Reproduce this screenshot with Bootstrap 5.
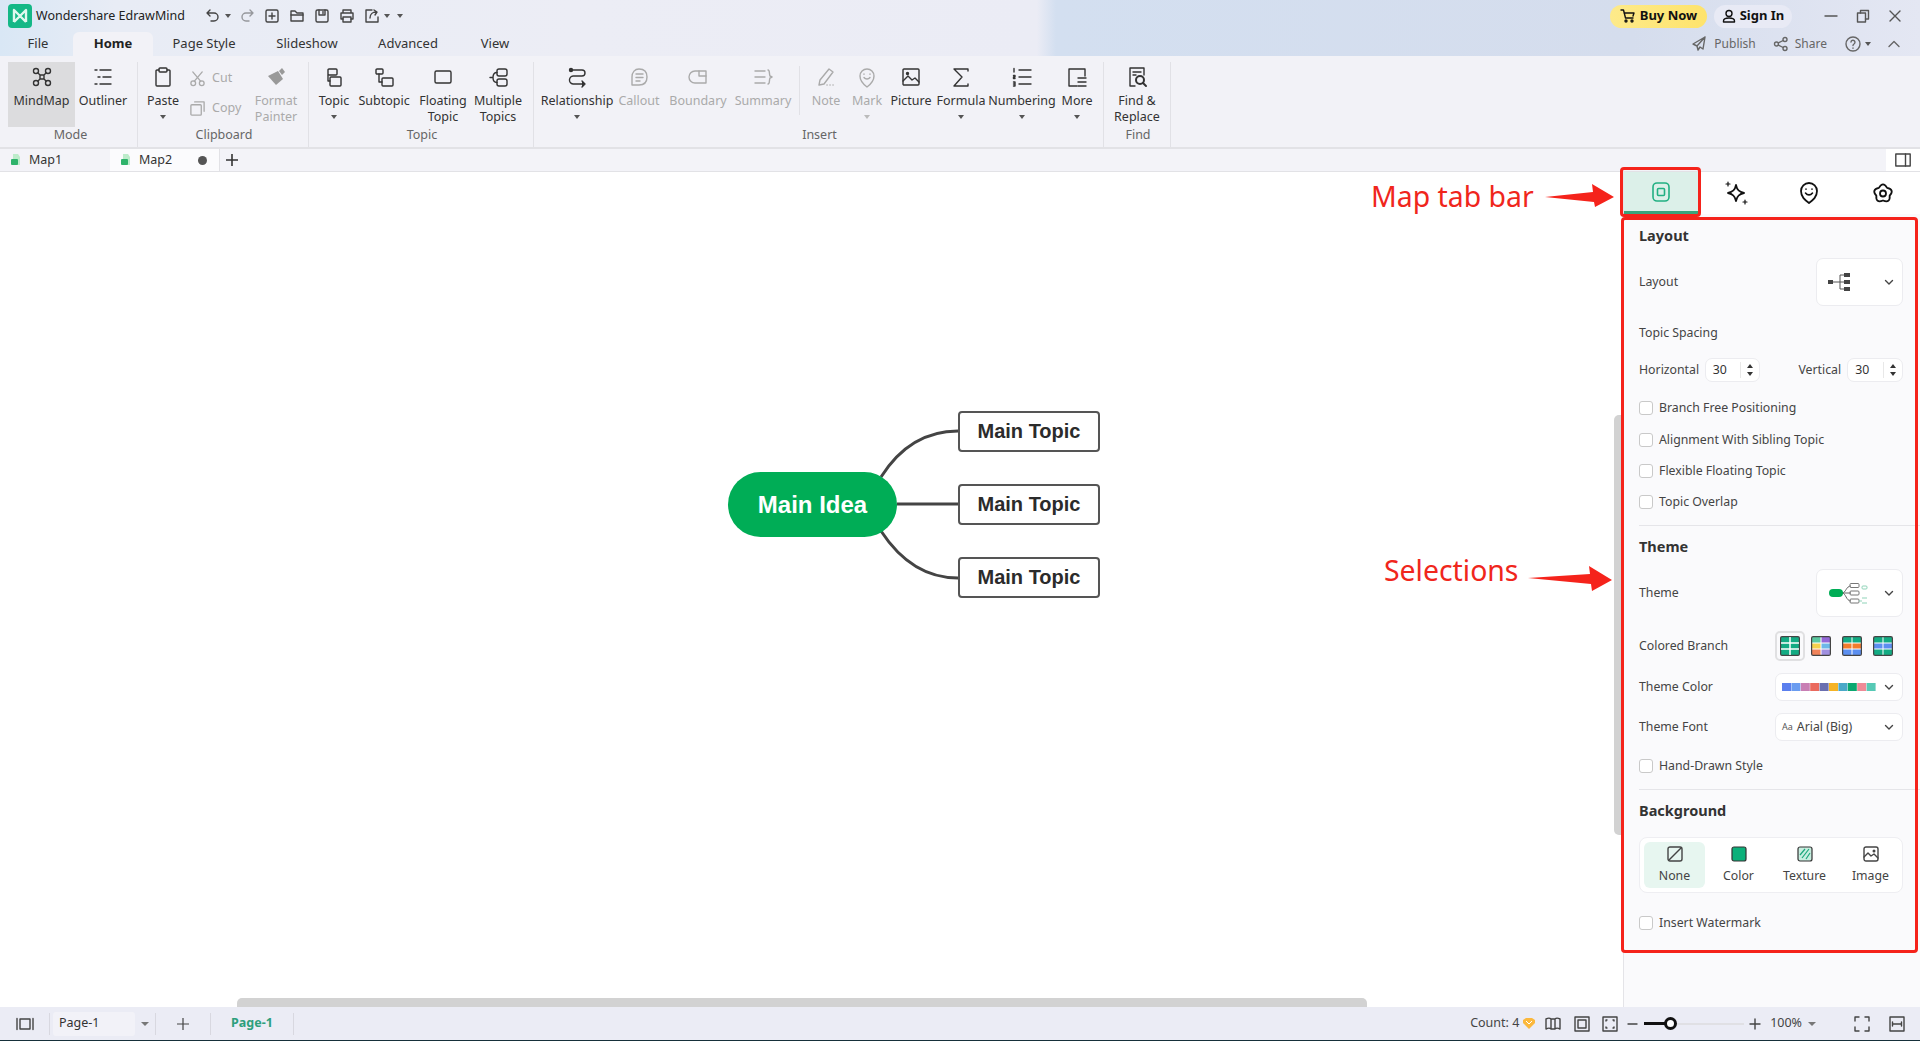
<!DOCTYPE html>
<html lang="en">
<head>
<meta charset="utf-8">
<title>Wondershare EdrawMind</title>
<link href="https://cdn.jsdelivr.net/npm/bootstrap@5.3.0/dist/css/bootstrap.min.css" rel="stylesheet">
<style>
html,body{height:100%;}
body{font-family:"Noto Sans","Liberation Sans",sans-serif;font-size:12.5px;color:#333;overflow:hidden;background:#fff;}
svg{display:block;flex:none;}
.ico{fill:none;stroke:currentColor;stroke-width:1.4;stroke-linecap:round;stroke-linejoin:round;}
.app-head{height:56px;background:linear-gradient(90deg,#d9e7f5 0,#e8ecf5 6%,#ecedf5 30%,#ebecf5 54%,#d3dff0 55%,#d5dded 85%,#e4e7f3 100%);}
.t-row{height:32px;}
.m-row{height:24px;}
.logo-box{width:24px;height:24px;margin-left:8px;}
.app-name{font-size:12.5px;margin-left:4px;width:164px;color:#222;white-space:nowrap;}
.qat{width:25px;color:#444;}
.qat-s{width:9px;color:#444;}
.qat-l{width:13px;color:#444;}
.pill{height:23px;border-radius:12px;font-weight:700;font-size:13px;color:#111;white-space:nowrap;}
.pill-buy{width:97px;background:linear-gradient(90deg,#fdea8a,#fee36c);}
.pill-sign{width:78px;background:#e8eaf5;margin-left:7px;margin-right:23px;}
.win{width:32px;color:#555;}
.mt-tab{height:24px;color:#333;font-size:13px;white-space:nowrap;}
.mt-on{background:#f2f2f7;border-radius:6px 6px 0 0;font-weight:700;color:#222;}
.w73{width:73px;padding-left:3px}.w76{width:76px}.w80{width:80px}.w102{width:102px}.w104{width:104px}.w98{width:98px}
.act{color:#666;font-size:12px;white-space:nowrap;}
.ribbon{height:93px;background:#f2f2f7;border-bottom:2px solid #e2e2e6;padding-top:6px;}
.grp{height:85px;border-right:1px solid #e1e1e6;}
.grp-mode{padding:0 6px 0 8px;}
.its{height:65px;}
.it{height:65px;padding-top:2px;color:#333;}
.it-off{color:#aaa;}
.it-sel{background:#dcdcde;}
.ic-b{height:26px;}
.lb{line-height:16px;margin-top:3px;white-space:nowrap;text-align:center;}
.cr{height:16px;}
.cr i{display:block;border:3.5px solid transparent;border-top:4px solid #555;border-bottom:0;}
.it-off .cr i{border-top-color:#bbb;}
.g-lb{height:16px;line-height:16px;text-align:center;color:#666;font-size:12.5px;padding-left:2px;}
.w30{width:30px}.w38{width:38px}.w42{width:42px}.w50{width:50px}.w52{width:52px}.w56{width:56px}.w58{width:58px}.w60{width:60px}.w66{width:66px}.w67{width:67px}.w68{width:68px}.w86{width:86px}
.sp2{width:2px}.sp14{width:14px}
.sp11{width:11px}
.in-sep{width:12px;height:49px;margin-top:4px;border-right:1px solid #e1e1e6;}
.sm-col{width:58px;padding-top:1px;color:#aaa;}
.sm-row{height:30px;gap:6px;padding-left:1px;}
.tabbar{height:23px;background:#f3f3f8;border-bottom:1px solid #e2e2e6;}
.dt{width:110px;height:22px;}
.dt-on{background:#fbfbfd;border-right:1px solid #e2e2e6;}
.dt-n{margin-left:8px;color:#333;}
.pin{margin-left:10px;}
.dot{width:9px;height:9px;border-radius:50%;background:#555;margin-left:26px;}
.plus{color:#333;margin-left:5px;}
.tb-r{width:34px;height:22px;background:#fff;color:#444;}
.main{height:835px;}
.canvas{background:#fff;}
.mm-svg{position:absolute;left:0;top:0;}
.root{position:absolute;left:728px;top:300px;width:169px;height:65px;border-radius:33px;background:#00ad56;color:#fff;font:700 24px "Liberation Sans",sans-serif;}
.topic{position:absolute;left:958px;width:142px;height:41px;background:#fff;border:2px solid #555;border-radius:4px;color:#2b2b2b;font:700 20px "Liberation Sans",sans-serif;}
.tp1{top:239px}.tp2{top:312px}.tp3{top:385px}
.sb-h{position:absolute;left:237px;width:1130px;bottom:0;height:9px;background:#d2d2d2;border-radius:5px 5px 0 0;}
.sb-v{position:absolute;left:1614px;top:243px;width:9px;height:420px;background:#d2d2d2;border-radius:5px 0 0 5px;}
.panel{width:297px;background:#fafafc;border-left:1px solid #e4e4e8;padding:0 17px 0 15px;flex:none;font-size:12.3px;color:#444;}
.p-tabs{height:42px;margin:0 -17px 0 -15px;background:#fff;}
.p-tab{width:75px;height:42px;color:#111;}
.p-tab-on{width:76px;background:#dcf0e9;border-bottom:3px solid #3aa37b;color:#22b083;}
.h-sec{height:20px;line-height:17px;font-weight:700;font-size:14.5px;color:#333;}
.r20{height:20px;line-height:20px;color:#444;}
.sel{background:#fff;border:1px solid #ececf0;border-radius:7px;}
.sel-lg{width:87px;height:48px;padding:0 8px 0 11px;}
.sel-md{width:128px;height:28px;padding:0 8px 0 6px;}
.aa-s{font-size:9px;color:#555;}
.num{width:56px;height:24px;padding:0 4px 0 7px;background:#fff;border:1px solid #ececf0;border-radius:7px;color:#333;}
.num-s{border-left:1px solid #e8e8e8;height:16px;padding-left:4px;}
.lab-h{width:66px;}
.lab-v{margin-left:38px;width:49px;}
.form-check-input.ck{width:14px;height:14px;margin:0 6px 0 0;border:1px solid #c9c9c9;border-radius:3px;background-color:#fff;flex:none;}
.mt11{margin-top:11px}.mt12{margin-top:12px}.mt13{margin-top:13px}.mt14{margin-top:14px}.mt15{margin-top:15px}.mt16{margin-top:16px}.mt17{margin-top:17px}.mt20{margin-top:20px}
.div-l{height:1px;background:#e5e5e9;margin-right:-17px;}
.sw-row{width:128px;height:30px;padding-right:1px;}
.sw{width:31px;height:30px;}
.sw-on{border:2px solid #e0e0e2;border-radius:5px;width:30px;}
.bg-box{height:56px;background:#fff;border:1px solid #eeeef2;border-radius:8px;padding:4px;gap:1px;}
.bg-it{width:65px;height:46px;border-radius:6px;color:#444;padding-top:4px;flex:none;}
.bg-on{background:#e7f6f0;width:61px;}
.bg-t{line-height:16px;margin-top:6px;}
.stat{height:34px;background:#ebecf5;border-bottom:1px solid #16303a;color:#444;}
.st-a{width:49px;}
.st-sep{width:1px;height:22px;background:#d8d8e0;}
.st-sel{width:82px;height:24px;margin-left:3px;padding-left:6px;background:#f2f2f8;border-radius:3px;color:#333;}
.st-car{width:20px;}
.st-car i{display:block;border:4px solid transparent;border-top:4px solid #777;border-bottom:0;}
.st-add{width:54px;}
.st-pg{width:82px;color:#2d9f7c;font-weight:700;}
.st-count{white-space:nowrap;width:50px;}
.c24{width:24px;color:#444;}
.c22{width:22px;color:#444;}
.slide{width:100px;height:14px;position:relative;}
.slide-t{position:absolute;left:0;right:0;top:6px;height:2px;background:#e0e0e4;}
.slide-f{position:absolute;left:0;top:5px;width:26px;height:3px;background:#111;}
.slide-k{position:absolute;left:20px;top:0;width:13px;height:13px;border:3px solid #111;border-radius:50%;background:#fff;}
.ml2{margin-left:2px}.ml3{margin-left:3px}.ml4{margin-left:4px}.ml5{margin-left:5px}.ml6{margin-left:6px}.ml7{margin-left:7px}
.ml11{margin-left:11px}.ml13{margin-left:13px}.ml16{margin-left:16px}.ml17{margin-left:17px}.ml28{margin-left:28px}
.mr9{margin-right:9px}.mr11{margin-right:11px}.mr19{margin-right:19px}
.note-ov{position:absolute;left:0;top:0;z-index:5;pointer-events:none;}
.red-a{position:absolute;border:3px solid #f5231b;border-radius:4px;}
.red-t{left:1620px;top:-5px;width:81px;height:50px;}
.red-p{left:1621px;top:45px;width:297px;height:736px;}
.nt{position:absolute;color:#f0261c;font-size:28.4px;line-height:36px;white-space:nowrap;font-family:"Noto Sans",sans-serif;}
.nt1{left:1371px;top:6px;}
.nt2{left:1384px;top:380px;}
</style>
</head>
<body class="d-flex flex-column">
<header class="app-head flex-none">
  <div class="t-row d-flex align-items-center">
    <div class="logo-box"><svg width="24" height="24" viewBox="0 0 24 24"><rect width="24" height="24" rx="4" fill="#14b886"/><path d="M6 18V6l6 6 6-6v12M6 18l6-6 6 6" fill="none" stroke="#dff8ee" stroke-width="2.4" stroke-linejoin="round"/></svg></div>
    <div class="app-name">Wondershare EdrawMind</div>
    <div class="qat d-flex justify-content-center"><svg width="16" height="16" viewBox="0 0 16 16" class="ico"><path d="M5 2 2 5l3 3M2 5h7a4 4 0 0 1 0 8H6"/></svg></div>
    <div class="qat-s d-flex cr align-items-center"><i></i></div>
    <div class="qat d-flex justify-content-center"><svg width="16" height="16" viewBox="0 0 16 16" class="ico"><path d="M11 2l3 3-3 3M14 5H7a4 4 0 0 0 0 8h3" opacity=".5"/></svg></div>
    <div class="qat d-flex justify-content-center"><svg width="16" height="16" viewBox="0 0 16 16" class="ico"><rect x="2" y="2" width="12" height="12" rx="1.5"/><path d="M8 5v6M5 8h6"/></svg></div>
    <div class="qat d-flex justify-content-center"><svg width="16" height="16" viewBox="0 0 16 16" class="ico"><path d="M2 13V3h4l2 2h6v8z"/><path d="M2 7h12"/></svg></div>
    <div class="qat d-flex justify-content-center"><svg width="16" height="16" viewBox="0 0 16 16" class="ico"><rect x="2" y="2" width="12" height="12" rx="1.5"/><path d="M5 2v5h6V2M9 3.5v2"/></svg></div>
    <div class="qat d-flex justify-content-center"><svg width="16" height="16" viewBox="0 0 16 16" class="ico"><path d="M4 5V2h8v3M4 11H2V5h12v6h-2"/><rect x="4" y="9" width="8" height="5"/></svg></div>
    <div class="qat d-flex justify-content-center"><svg width="16" height="16" viewBox="0 0 16 16" class="ico"><path d="M8 2H2v12h12V9"/><path d="M6 10c0-4 3-6 6-6M10 2l3 2-2 3"/></svg></div>
    <div class="qat-s d-flex cr align-items-center"><i></i></div>
    <div class="qat-l d-flex cr align-items-center justify-content-center"><i></i></div>
    <div class="ms-auto d-flex align-items-center">
      <div class="pill pill-buy d-flex align-items-center justify-content-center gap-1"><svg width="16" height="16" viewBox="0 0 16 16" class="ico"><path d="M1 2h2.500l2 8h7.500M4 5h10l-1 3"/><circle cx="6" cy="13" r="1"/><circle cx="12" cy="13" r="1"/></svg>Buy Now</div>
      <div class="pill pill-sign d-flex align-items-center justify-content-center gap-1"><svg width="14" height="14" viewBox="0 0 14 14" class="ico"><circle cx="7" cy="4.500" r="3"/><path d="M1.500 13v-1c0-2 2-3 5.500-3s5.500 1 5.500 3v1z"/></svg>Sign In</div>
      <div class="win d-flex justify-content-center"><svg width="14" height="14" viewBox="0 0 14 14" class="ico"><path d="M1 7h12"/></svg></div>
      <div class="win d-flex justify-content-center"><svg width="14" height="14" viewBox="0 0 14 14" class="ico"><rect x="1.500" y="4" width="8" height="9"/><path d="M4.500 4V1.500h8V10H9.500"/></svg></div>
      <div class="win d-flex justify-content-center mr9"><svg width="14" height="14" viewBox="0 0 14 14" class="ico"><path d="M2 2l10 10M12 2 2 12"/></svg></div>
    </div>
  </div>
  <div class="m-row d-flex">
    <div class="mt-tab d-flex align-items-center justify-content-center w73">File</div>
    <div class="mt-tab mt-on d-flex align-items-center justify-content-center w80">Home</div>
    <div class="mt-tab d-flex align-items-center justify-content-center w102">Page Style</div>
    <div class="mt-tab d-flex align-items-center justify-content-center w104">Slideshow</div>
    <div class="mt-tab d-flex align-items-center justify-content-center w98">Advanced</div>
    <div class="mt-tab d-flex align-items-center justify-content-center w76">View</div>
    <div class="ms-auto d-flex align-items-center act">
      <svg width="16" height="16" viewBox="0 0 16 16" class="ico"><path d="M14 1 2 8l4 2 1 4 2-3 3 2zM6 10l8-9"/></svg>
      <span class="ml7">Publish</span>
      <svg class="ml17" width="16" height="16" viewBox="0 0 16 16"><g class="ico"><circle cx="3.500" cy="8" r="2"/><circle cx="12" cy="3.500" r="2"/><circle cx="12" cy="12.500" r="2"/><path d="M5.300 7 10.200 4.500M5.300 9l4.900 2.500"/></g></svg>
      <span class="ml6">Share</span>
      <svg class="ml17" width="18" height="18" viewBox="0 0 18 18"><g class="ico"><circle cx="9" cy="9" r="7"/><path d="M7 7a2 2 0 1 1 3 2c-.7.400-1 .8-1 1.500M9 13v.2"/></g></svg>
      <span class="cr d-flex align-items-center ml3"><i></i></span>
      <svg class="ml16 mr19" width="14" height="14" viewBox="0 0 14 14"><path class="ico" d="M2 9.500 7 4.500l5 5"/></svg>
    </div>
  </div>
</header>

<section class="ribbon d-flex flex-none">
  <div class="grp grp-mode">
    <div class="its d-flex">
      <div class="it it-sel w67 d-flex flex-column align-items-center">
        <div class="ic-b d-flex align-items-center"><svg width="22" height="22" viewBox="0 0 22 22" class="ico"><circle cx="5" cy="5" r="2.500"/><circle cx="17" cy="5" r="2.500"/><circle cx="5" cy="17" r="2.500"/><circle cx="17" cy="17" r="2.500"/><path d="M7 7l2 2h4l2-2M7 15l2-2h4l2 2M9 9v4M13 9v4"/></svg></div>
        <div class="lb">MindMap</div>
      </div>
      <div class="it w56 d-flex flex-column align-items-center">
        <div class="ic-b d-flex align-items-center"><svg width="22" height="22" viewBox="0 0 22 22" class="ico"><path d="M3 4h2M8 4h11M6 11h2M11 11h8M3 18h2M8 18h11"/></svg></div>
        <div class="lb">Outliner</div>
      </div>
    </div>
    <div class="g-lb">Mode</div>
  </div>
  <div class="grp">
    <div class="its d-flex">
      <div class="it w50 d-flex flex-column align-items-center">
        <div class="ic-b d-flex align-items-center"><svg width="22" height="22" viewBox="0 0 22 22" class="ico"><path d="M7 4H5a1 1 0 0 0-1 1v14a1 1 0 0 0 1 1h12a1 1 0 0 0 1-1V5a1 1 0 0 0-1-1h-2"/><rect x="7" y="2" width="8" height="4" rx="1"/></svg></div>
        <div class="lb">Paste<div class="cr d-flex align-items-center justify-content-center"><i></i></div></div>
      </div>
      <div class="sm-col">
        <div class="sm-row d-flex align-items-center"><svg width="17" height="17" viewBox="0 0 18 18" class="ico"><circle cx="4.500" cy="14" r="2.500"/><circle cx="13.500" cy="14" r="2.500"/><path d="M5.500 12 14 2M12.500 12 4 2"/></svg><span>Cut</span></div>
        <div class="sm-row d-flex align-items-center"><svg width="17" height="17" viewBox="0 0 18 18" class="ico"><rect x="2" y="5" width="11" height="11" rx="1"/><path d="M6 2h10v10"/></svg><span>Copy</span></div>
      </div>
      <div class="it it-off w60 d-flex flex-column align-items-center">
        <div class="ic-b d-flex align-items-center"><svg width="22" height="22" viewBox="0 0 22 22"><path d="M3 10 13 5l5 8-7 6z" fill="#999"/><path d="M14 5l3-3 3 4-3 3z" fill="#999"/></svg></div>
        <div class="lb">Format<br>Painter</div>
      </div>
      <div class="sp2"></div>
    </div>
    <div class="g-lb">Clipboard</div>
  </div>
  <div class="grp">
    <div class="its d-flex">
      <div class="it w50 d-flex flex-column align-items-center">
        <div class="ic-b d-flex align-items-center"><svg width="22" height="22" viewBox="0 0 22 22" class="ico"><rect x="5" y="3" width="9" height="6" rx="1"/><rect x="7" y="11" width="11" height="9" rx="1"/><path d="M5 9v6h2"/></svg></div>
        <div class="lb">Topic<div class="cr d-flex align-items-center justify-content-center"><i></i></div></div>
      </div>
      <div class="it w50 d-flex flex-column align-items-center">
        <div class="ic-b d-flex align-items-center"><svg width="22" height="22" viewBox="0 0 22 22" class="ico"><rect x="3" y="3" width="7" height="5" rx="1"/><rect x="9" y="12" width="11" height="8" rx="1"/><path d="M6 8v8h3"/></svg></div>
        <div class="lb">Subtopic</div>
      </div>
      <div class="it w68 d-flex flex-column align-items-center">
        <div class="ic-b d-flex align-items-center"><svg width="22" height="22" viewBox="0 0 22 22" class="ico"><rect x="3" y="5" width="16" height="12" rx="1.500"/></svg></div>
        <div class="lb">Floating<br>Topic</div>
      </div>
      <div class="it w42 d-flex flex-column align-items-center">
        <div class="ic-b d-flex align-items-center"><svg width="22" height="22" viewBox="0 0 22 22" class="ico"><rect x="10" y="3" width="10" height="7" rx="2"/><rect x="10" y="13" width="10" height="7" rx="2"/><path d="M3 11.500h3M10 6.500C7 6.500 6 8.500 6 11.500s1 5 4 5"/></svg></div>
        <div class="lb">Multiple<br>Topics</div>
      </div>
      <div class="sp14"></div>
    </div>
    <div class="g-lb">Topic</div>
  </div>
  <div class="grp">
    <div class="its d-flex">
      <div class="it w86 d-flex flex-column align-items-center">
        <div class="ic-b d-flex align-items-center"><svg width="22" height="22" viewBox="0 0 22 22" class="ico"><circle cx="5" cy="4" r="1.500" fill="currentColor"/><path d="M7 4h9a3 3 0 0 1 0 6H8a4 4 0 0 0-1 8h11"/><path d="M16 15l3 3-3 3" fill="currentColor"/></svg></div>
        <div class="lb">Relationship<div class="cr d-flex align-items-center justify-content-center"><i></i></div></div>
      </div>
      <div class="it it-off w38 d-flex flex-column align-items-center">
        <div class="ic-b d-flex align-items-center"><svg width="22" height="22" viewBox="0 0 22 22" class="ico"><path d="M11 3c5 0 8 3 8 8s-3 8-8 8H4v-8c0-5 3-8 7-8z"/><path d="M8 8h7M8 11.500h7M8 15h4"/></svg></div>
        <div class="lb">Callout</div>
      </div>
      <div class="it it-off w80 d-flex flex-column align-items-center">
        <div class="ic-b d-flex align-items-center"><svg width="22" height="22" viewBox="0 0 22 22" class="ico"><path d="M8 5h11v12H8a6 6 0 0 1 0-12z"/><path d="M12 5v5h7"/></svg></div>
        <div class="lb">Boundary</div>
      </div>
      <div class="it it-off w50 d-flex flex-column align-items-center">
        <div class="ic-b d-flex align-items-center"><svg width="22" height="22" viewBox="0 0 22 22" class="ico"><path d="M3 5h10M3 11h10M3 17h10M16 4c2 0 1 4 2 6l2 1-2 1c-1 2 0 6-2 6"/></svg></div>
        <div class="lb">Summary</div>
      </div>
      <div class="in-sep"></div>
      <div class="it it-off w52 d-flex flex-column align-items-center">
        <div class="ic-b d-flex align-items-center"><svg width="22" height="22" viewBox="0 0 22 22" class="ico"><path d="M14 3l4 3-9 12-5 1 1-5zM12 19h.1M15 19h.1M18 19h.1"/></svg></div>
        <div class="lb">Note</div>
      </div>
      <div class="it it-off w30 d-flex flex-column align-items-center">
        <div class="ic-b d-flex align-items-center"><svg width="22" height="22" viewBox="0 0 22 22" class="ico"><path d="M11 21c-4-3-7-6-7-11a7 7 0 0 1 14 0c0 5-3 8-7 11z"/><path d="M8 8v.2M14 8v.2M8 11.500c1.500 2 4.500 2 6 0"/></svg></div>
        <div class="lb">Mark<div class="cr d-flex align-items-center justify-content-center"><i></i></div></div>
      </div>
      <div class="it w58 d-flex flex-column align-items-center">
        <div class="ic-b d-flex align-items-center"><svg width="22" height="22" viewBox="0 0 22 22" class="ico"><rect x="3" y="3" width="16" height="16" rx="1"/><circle cx="7.500" cy="7.500" r="1" fill="currentColor"/><path d="M3 15l5-5 4 4 3-2 4 4"/></svg></div>
        <div class="lb">Picture</div>
      </div>
      <div class="it w42 d-flex flex-column align-items-center">
        <div class="ic-b d-flex align-items-center"><svg width="22" height="22" viewBox="0 0 22 22" class="ico"><path d="M18 5V3H4l8 8-8 9h14v-2"/></svg></div>
        <div class="lb">Formula<div class="cr d-flex align-items-center justify-content-center"><i></i></div></div>
      </div>
      <div class="it w80 d-flex flex-column align-items-center">
        <div class="ic-b d-flex align-items-center"><svg width="22" height="22" viewBox="0 0 22 22" class="ico"><path d="M8 4h12M8 11h12M8 18h12M3 2.500V6M2.500 9.500h1.500v1.500h-1.500V12.500h1.500M2.500 16h1.500v4h-1.500M2.500 18h1.500"/></svg></div>
        <div class="lb">Numbering<div class="cr d-flex align-items-center justify-content-center"><i></i></div></div>
      </div>
      <div class="it w30 d-flex flex-column align-items-center">
        <div class="ic-b d-flex align-items-center"><svg width="22" height="22" viewBox="0 0 22 22" class="ico"><path d="M11 20H3V3h16v7"/><path d="M12 12h8M12 16h8M12 20h8"/></svg></div>
        <div class="lb">More<div class="cr d-flex align-items-center justify-content-center"><i></i></div></div>
      </div>
      <div class="sp11"></div>
    </div>
    <div class="g-lb">Insert</div>
  </div>
  <div class="grp">
    <div class="its d-flex">
      <div class="it w66 d-flex flex-column align-items-center">
        <div class="ic-b d-flex align-items-center"><svg width="22" height="22" viewBox="0 0 22 22" class="ico"><path d="M9 20H4V2h14v7M7 6h8M7 9h3"/><circle cx="14" cy="14" r="4" stroke-width="2"/><path d="M17 17l3 3" stroke-width="2"/></svg></div>
        <div class="lb">Find &amp;<br>Replace</div>
      </div>
    </div>
    <div class="g-lb">Find</div>
  </div>
</section>

<nav class="tabbar d-flex flex-none">
  <div class="dt d-flex align-items-center"><span class="pin"><svg width="11" height="12" viewBox="0 0 11 12"><path d="M3 0h5l2 3v8H3z" fill="#bdeccb"/><rect x="1" y="5" width="7" height="6" rx="1" fill="#2eb36b"/></svg></span><span class="dt-n">Map1</span></div>
  <div class="dt dt-on d-flex align-items-center"><span class="pin"><svg width="11" height="12" viewBox="0 0 11 12"><path d="M3 0h5l2 3v8H3z" fill="#bdeccb"/><rect x="1" y="5" width="7" height="6" rx="1" fill="#2eb36b"/></svg></span><span class="dt-n">Map2</span><span class="dot"></span></div>
  <div class="plus d-flex align-items-center ml5"><svg width="14" height="14" viewBox="0 0 14 14"><path d="M7 1v12M1 7h12" stroke="#333" stroke-width="1.600"/></svg></div>
  <div class="tb-r ms-auto d-flex align-items-center justify-content-center"><svg width="16" height="14" viewBox="0 0 16 14"><g class="ico"><rect x=".8" y="1" width="14.400" height="12"/><path d="M10.500 1v12"/></g></svg></div>
</nav>

<main class="main d-flex position-relative flex-none">
  <div class="canvas flex-grow-1 position-relative">
    <svg class="mm-svg" width="1100" height="500" viewBox="0 0 1100 500" fill="none" stroke="#444" stroke-width="3"><path d="M881 305C900 275 925 259 958 259"/><path d="M897 332H958"/><path d="M881 359C900 388 925 406 958 406"/></svg>
    <div class="root d-flex align-items-center justify-content-center">Main Idea</div>
    <div class="topic tp1 d-flex align-items-center justify-content-center">Main Topic</div>
    <div class="topic tp2 d-flex align-items-center justify-content-center">Main Topic</div>
    <div class="topic tp3 d-flex align-items-center justify-content-center">Main Topic</div>
    <div class="sb-h"></div>
    <div class="sb-v"></div>
  </div>
  <aside class="panel">
    <div class="p-tabs d-flex">
      <div class="p-tab p-tab-on d-flex align-items-center justify-content-center"><svg width="22" height="22" viewBox="0 0 22 22" class="ico"><rect x="3" y="2" width="16" height="18" rx="4" stroke-width="1.600"/><rect x="7.500" y="7.500" width="7" height="7" rx="1" stroke-width="1.600"/></svg></div>
      <div class="p-tab d-flex align-items-center justify-content-center"><svg width="24" height="24" viewBox="0 0 24 24" class="ico"><path d="M12 4c1 5 3 7 8 8-5 1-7 3-8 8-1-5-3-7-8-8 5-1 7-3 8-8z" stroke-width="1.800"/><path d="M4 1v4M2 3h4M21 19v4M19 21h4" stroke-width="1.200"/></svg></div>
      <div class="p-tab d-flex align-items-center justify-content-center"><svg width="24" height="24" viewBox="0 0 24 24" class="ico"><path d="M12 22c-4-3-8-6-8-12a8 8 0 0 1 16 0c0 6-4 9-8 12z" stroke-width="1.800"/><path d="M9 8v.2M15 8v.2M8.500 12c2 2.500 5 2.500 7 0" stroke-width="1.600"/></svg></div>
      <div class="p-tab d-flex align-items-center justify-content-center"><svg width="24" height="24" viewBox="0 0 24 24" class="ico"><path d="M7.890 6.840Q12 0 16.110 6.840Q23.900 8.600 18.660 14.660Q19.350 22.600 12 19.500Q4.650 22.600 5.340 14.660Q.1 8.600 7.890 6.840z" stroke-width="1.800"/><circle cx="12" cy="12.500" r="3" stroke-width="1.800"/></svg></div>
    </div>
    <div class="h-sec mt13">Layout</div>
    <div class="d-flex align-items-center justify-content-between mt11">
      <span>Layout</span>
      <div class="sel sel-lg d-flex align-items-center justify-content-between">
        <svg width="24" height="20" viewBox="0 0 24 20"><g fill="#444"><rect x="0" y="8" width="5" height="4"/><rect x="16" y="1" width="6" height="4"/><rect x="16" y="8" width="6" height="4"/><rect x="16" y="15" width="6" height="4"/></g><path d="M5 10h11M16 3h-4v14h4" fill="none" stroke="#555"/></svg>
        <svg width="10" height="10" viewBox="0 0 10 10"><path class="ico" d="M1.500 3.500 5 7l3.500-3.500"/></svg>
      </div>
    </div>
    <div class="r20 mt17">Topic Spacing</div>
    <div class="d-flex align-items-center mt15">
      <span class="lab-h">Horizontal</span>
      <div class="num d-flex align-items-center justify-content-between"><span>30</span><span class="num-s"><svg width="10" height="16" viewBox="0 0 10 16"><path d="M5 2l3 4H2zM5 14l3-4H2z" fill="#333"/></svg></span></div>
      <span class="lab-v">Vertical</span>
      <div class="num d-flex align-items-center justify-content-between"><span>30</span><span class="num-s"><svg width="10" height="16" viewBox="0 0 10 16"><path d="M5 2l3 4H2zM5 14l3-4H2z" fill="#333"/></svg></span></div>
    </div>
    <label class="r20 d-flex align-items-center mt16"><input class="form-check-input ck" type="checkbox">Branch Free Positioning</label>
    <label class="r20 d-flex align-items-center mt12"><input class="form-check-input ck" type="checkbox">Alignment With Sibling Topic</label>
    <label class="r20 d-flex align-items-center mt11"><input class="form-check-input ck" type="checkbox">Flexible Floating Topic</label>
    <label class="r20 d-flex align-items-center mt11"><input class="form-check-input ck" type="checkbox">Topic Overlap</label>
    <div class="div-l mt13"></div>
    <div class="h-sec mt12">Theme</div>
    <div class="d-flex align-items-center justify-content-between mt11">
      <span>Theme</span>
      <div class="sel sel-lg d-flex align-items-center justify-content-between">
        <svg width="42" height="24" viewBox="0 0 42 24" fill="none"><path d="M14 12C18 12 18 5 23 5M14 12h9M14 12c4 0 4 8 9 8" stroke="#666" stroke-width="1"/><rect x="1" y="8" width="14" height="8" rx="4" fill="#00ad56"/><g stroke="#777"><rect x="22" y="2.500" width="9" height="4" rx="1"/><rect x="22" y="10" width="9" height="4" rx="1"/><rect x="22" y="18" width="9" height="4" rx="1"/></g><g stroke="#8fd3b8"><rect x="34" y="5" width="5" height="3" rx="1"/><path d="M31 20h3M34 17h5M34 22h5"/></g></svg>
        <svg width="10" height="10" viewBox="0 0 10 10"><path class="ico" d="M1.500 3.500 5 7l3.500-3.500"/></svg>
      </div>
    </div>
    <div class="d-flex align-items-center justify-content-between mt14">
      <span>Colored Branch</span>
      <div class="sw-row d-flex">
        <div class="sw sw-on d-flex align-items-center justify-content-center"><svg width="20" height="20" viewBox="0 0 20 20"><rect x=".6" y=".6" width="18.800" height="18.800" rx="1.500" fill="#13ab83" stroke="#444" stroke-width="1.200"/><path d="M1 7h18M1 13h18M10 1v18" stroke="#fff" stroke-width="1.500"/></svg></div>
        <div class="sw d-flex align-items-center justify-content-center"><svg width="20" height="20" viewBox="0 0 20 20"><rect x="1" y="1" width="9" height="6" fill="#5bc8a0"/><rect x="10" y="1" width="9" height="6" fill="#9468d8"/><rect x="1" y="7" width="9" height="6" fill="#f6d04d"/><rect x="10" y="7" width="9" height="6" fill="#6eb8e8"/><rect x="1" y="13" width="9" height="6" fill="#f0835a"/><rect x="10" y="13" width="9" height="6" fill="#a090e0"/><path d="M1 7h18M1 13h18M10 1v18" stroke="#fff"/><rect x=".6" y=".6" width="18.800" height="18.800" rx="1.500" fill="none" stroke="#444" stroke-width="1.200"/></svg></div>
        <div class="sw d-flex align-items-center justify-content-center"><svg width="20" height="20" viewBox="0 0 20 20"><rect x="1" y="1" width="18" height="6" fill="#13ab83"/><rect x="1" y="7" width="18" height="6" fill="#f47c2c"/><rect x="1" y="13" width="18" height="6" fill="#5c8ff0"/><path d="M1 7h18M1 13h18M10 1v18" stroke="#fff"/><rect x=".6" y=".6" width="18.800" height="18.800" rx="1.500" fill="none" stroke="#444" stroke-width="1.200"/></svg></div>
        <div class="sw d-flex align-items-center justify-content-center"><svg width="20" height="20" viewBox="0 0 20 20"><rect x="1" y="1" width="18" height="6" fill="#13ab83"/><rect x="1" y="7" width="18" height="6" fill="#5c8ff0"/><rect x="1" y="13" width="18" height="6" fill="#13ab83"/><path d="M1 7h18M1 13h18M10 1v18" stroke="#fff"/><rect x=".6" y=".6" width="18.800" height="18.800" rx="1.500" fill="none" stroke="#444" stroke-width="1.200"/></svg></div>
      </div>
    </div>
    <div class="d-flex align-items-center justify-content-between mt12">
      <span>Theme Color</span>
      <div class="sel sel-md d-flex align-items-center justify-content-between">
        <svg width="94" height="8" viewBox="0 0 94 8"><rect x="0" width="9" height="8" fill="#5b7fee"/><rect x="9.400" width="9" height="8" fill="#6a9cf0"/><rect x="18.800" width="9" height="8" fill="#c87fb4"/><rect x="28.200" width="9" height="8" fill="#ea6a5e"/><rect x="37.600" width="9" height="8" fill="#6a6fb0"/><rect x="47" width="9" height="8" fill="#f5b325"/><rect x="56.400" width="9" height="8" fill="#4aa8c8"/><rect x="65.800" width="9" height="8" fill="#0ba870"/><rect x="75.200" width="9" height="8" fill="#ee8a96"/><rect x="84.600" width="9" height="8" fill="#56c9b5"/></svg>
        <svg width="10" height="10" viewBox="0 0 10 10"><path class="ico" d="M1.500 3.500 5 7l3.500-3.500"/></svg>
      </div>
    </div>
    <div class="d-flex align-items-center justify-content-between mt12">
      <span>Theme Font</span>
      <div class="sel sel-md d-flex align-items-center">
        <span class="aa-s">Aa</span><span class="ml4 flex-grow-1">Arial (Big)</span>
        <svg width="10" height="10" viewBox="0 0 10 10"><path class="ico" d="M1.500 3.500 5 7l3.500-3.500"/></svg>
      </div>
    </div>
    <label class="r20 d-flex align-items-center mt15"><input class="form-check-input ck" type="checkbox">Hand-Drawn Style</label>
    <div class="div-l mt13"></div>
    <div class="h-sec mt12">Background</div>
    <div class="bg-box d-flex mt15">
      <div class="bg-it bg-on d-flex flex-column align-items-center"><svg width="16" height="16" viewBox="0 0 16 16"><g class="ico"><rect x="1" y="1" width="14" height="14" rx="2"/><path d="M2 14 14 2"/></g></svg><span class="bg-t">None</span></div>
      <div class="bg-it d-flex flex-column align-items-center"><svg width="16" height="16" viewBox="0 0 16 16"><rect x="1" y="1" width="14" height="14" rx="2" fill="#0cb07a" stroke="#333" stroke-width="1.200"/></svg><span class="bg-t">Color</span></div>
      <div class="bg-it d-flex flex-column align-items-center"><svg width="16" height="16" viewBox="0 0 16 16"><rect x="1" y="1" width="14" height="14" rx="2" fill="#c8eee0" stroke="#333" stroke-width="1.200"/><path d="M3 9l5-6M5 12l7-9M9 13l4-6" stroke="#1ca87c" stroke-width="1.200"/></svg><span class="bg-t">Texture</span></div>
      <div class="bg-it d-flex flex-column align-items-center"><svg width="16" height="16" viewBox="0 0 16 16"><g class="ico"><rect x="1" y="1" width="14" height="14" rx="2"/><path d="M1 11l4-4 3 3 3-2 4 4"/><circle cx="11" cy="5" r=".8"/></g></svg><span class="bg-t">Image</span></div>
    </div>
    <label class="r20 d-flex align-items-center mt20"><input class="form-check-input ck" type="checkbox">Insert Watermark</label>
  </aside>
  <svg class="note-ov" width="1920" height="500" viewBox="0 0 1920 500"><polygon points="1545,25 1593,20 1592,12 1614,25 1595,35 1594,30" fill="#f5231b"/><polygon points="1528,406 1590,402 1589,394 1612,408 1592,419 1591,412" fill="#f5231b"/></svg>
  <div class="nt nt1 note-t">Map tab bar</div>
  <div class="nt nt2 note-t">Selections</div>
  <div class="red-a red-t"></div>
  <div class="red-a red-p"></div>
</main>

<footer class="stat d-flex align-items-center flex-none">
  <div class="st-a d-flex justify-content-center"><svg width="18" height="14" viewBox="0 0 18 14"><g class="ico"><path d="M1 1.500v11M17 1.500v11"/><rect x="4" y="2" width="10" height="10"/></g></svg></div>
  <div class="st-sep"></div>
  <div class="st-sel d-flex align-items-center">Page-1</div>
  <div class="st-car d-flex justify-content-center"><i></i></div>
  <div class="st-sep"></div>
  <div class="st-add d-flex justify-content-center"><svg width="14" height="14" viewBox="0 0 14 14"><path d="M7 1v12M1 7h12" stroke="#444" stroke-width="1.200"/></svg></div>
  <div class="st-sep"></div>
  <div class="st-pg text-center">Page-1</div>
  <div class="st-sep"></div>
  <div class="ms-auto d-flex align-items-center">
    <div class="st-count">Count: 4</div>
    <svg class="ml2" width="14" height="13" viewBox="0 0 14 13"><path d="M1 3l3-2h6l3 2v3l-6 6-6-6z" fill="#fbb83c"/><path d="M4 4l3 3 3-3" stroke="#fff" fill="none"/></svg>
    <div class="c24 ml5 d-flex justify-content-center"><svg width="16" height="14" viewBox="0 0 16 14" class="ico"><path d="M1 2c2-1 4-1 5 0v10c-1-1-3-1-5 0zM6 2h4v10H6M10 2c1-1 3-1 5 0v10c-2-1-4-1-5 0z"/></svg></div>
    <div class="c24 ml5 d-flex justify-content-center"><svg width="16" height="16" viewBox="0 0 16 16" class="ico"><rect x="1" y="1" width="14" height="14"/><rect x="4" y="4" width="8" height="8"/></svg></div>
    <div class="c24 ml4 d-flex justify-content-center"><svg width="16" height="16" viewBox="0 0 16 16" class="ico"><rect x="1" y="1" width="14" height="14"/><path d="M4 5V4h1M12 5V4h-1M4 11v1h1M12 11v1h-1"/></svg></div>
    <div class="c22 d-flex justify-content-center"><svg width="12" height="12" viewBox="0 0 12 12" class="ico"><path d="M1 6h9"/></svg></div>
    <div class="slide"><span class="slide-t"></span><span class="slide-f"></span><span class="slide-k"></span></div>
    <div class="c22 d-flex justify-content-center"><svg width="12" height="12" viewBox="0 0 12 12" class="ico"><path d="M1 6h10M6 1v10"/></svg></div>
    <div class="ml4">100%</div>
    <div class="st-car d-flex justify-content-center"><i></i></div>
    <div class="c24 ml28 d-flex justify-content-center"><svg width="16" height="16" viewBox="0 0 16 16" class="ico"><path d="M1 5V1h4M11 1h4v4M15 11v4h-4M5 15H1v-4"/></svg></div>
    <div class="c24 ml11 mr11 d-flex justify-content-center"><svg width="16" height="16" viewBox="0 0 16 16" class="ico"><rect x="1" y="1" width="14" height="14"/><path d="M3.500 8h9M3.500 6v4M12.500 6v4"/></svg></div>
  </div>
</footer>
</body>
</html>
